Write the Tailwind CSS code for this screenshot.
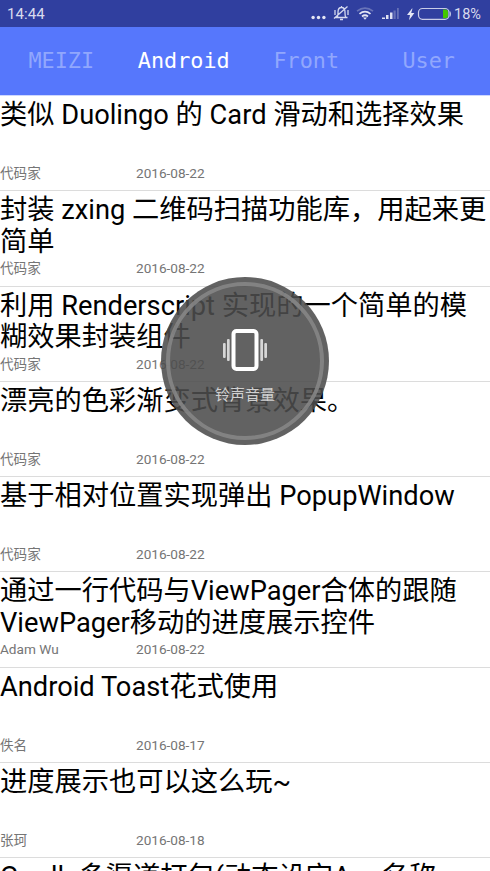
<!DOCTYPE html>
<html lang="zh-CN"><head><meta charset="utf-8"><title>Android</title>
<script src="https://cdn.jsdelivr.net/npm/@tailwindcss/browser@4"></script></head>
<body class="relative w-[490px] h-[871px] overflow-hidden bg-white font-[Roboto,'Noto_Sans_CJK_SC',sans-serif] text-black">
<header class="h-[27px] bg-[#303f9f] flex items-center justify-between pl-[7px] pr-2 text-[#d8dbee]">
<span class="text-[15px] leading-[27px] pt-px font-[Roboto,sans-serif] tracking-[0.1px]">14:44</span>
<svg class="ml-auto" width="142" height="27" viewBox="310 0 142 27" fill="none">
<g fill="#e4e6f4"><circle cx="313.100" cy="17.500" r="1.700"/><circle cx="318.500" cy="17.500" r="1.700"/><circle cx="323.900" cy="17.500" r="1.700"/></g>
<g stroke="#d5d9ef" stroke-width="1.300"><path d="M335.500 17.500h12M337 17.500c1.200-1.500 1-3 1-5.500 0-3 1.500-4.500 3.500-4.500s3.500 1.500 3.500 4.500c0 2.500-.2 4 1 5.500M340 19.500h3M341.500 6v1.500M335 10v5M348 10v5M334 18.500L347.500 6.500"/></g>
<g stroke="#e4e6f4" stroke-width="1.700"><path d="M357 11.200Q365 5 373 11.200" stroke="#6873b8"/><path d="M359.500 13.800Q365 9.300 370.500 13.800"/><path d="M362 16.500Q365 14 368 16.500"/></g><path d="M363 17.500h4l-2 2.300z" fill="#e4e6f4"/>
<g fill="#dfe2f3"><path d="M382 17.500h3v1.500h-3zM386 15h2.500v4h-2.500zM390 12.500h2.500v6.500h-2.500z"/><path d="M393.500 10.500h2.200V19h-2.200zM397 8h1.800v11H397z" fill="#6570b6"/></g>
<path d="M412 8.500L407 15h3l-1 5.300 5.400-7.300h-3.200l1.300-4.500z" fill="#e4e6f4"/>
<rect x="418.500" y="8.500" width="30.500" height="10.800" rx="4" stroke="#c8cce7" stroke-width="1.200"/><path d="M443 9.500h2.500q2.500 0 2.500 2.500v4q0 2.300-2.500 2.300H443z" fill="#43c800"/><path d="M450 11.500q1 2.500 0 5" stroke="#c8cce7"/></svg>
<span class="ml-[2px] pt-px text-[14.500px] leading-[27px] w-[28px] whitespace-nowrap">18%</span>
</header>
<nav class="h-[69px] grid grid-cols-4 items-center bg-[#5677fc] border-b border-[#cdd7fe] text-center text-[21.8px] font-['DejaVu_Sans_Mono',monospace] text-[#91a7fd]">
<span>MEIZI</span><span class="text-white">Android</span><span>Front</span><span>User</span>
</nav>
<main id="list" class="h-[775px] overflow-hidden"></main>
<aside class="absolute left-[161px] top-[277px] size-[168px] rounded-full bg-[#4c4c4c]/88 p-[5px]">
<div class="size-full rounded-full border-[4.500px] border-[#888888]/85 flex flex-col items-center pt-[43px]">
<svg width="46" height="43" viewBox="0 0 46 43" fill="#fff"><rect x="11.500" y="2" width="23" height="38" rx="3" fill="none" stroke="#fff" stroke-width="4"/><g fill="#d6d6d6"><rect x="1" y="14" width="2.700" height="15" rx="1"/><rect x="5" y="10" width="2.700" height="22" rx="1"/><rect x="38.300" y="10" width="2.700" height="22" rx="1"/><rect x="42.300" y="14" width="2.700" height="15" rx="1"/></g></svg>
<p class="mt-[13px] text-[15px] leading-[20px] text-[#d0d0d0]">铃声音量</p></div>
</aside>
<script>
const items=[
["类似 Duolingo 的 Card 滑动和选择效果","代码家","2016-08-22"],
["封装 zxing 二维码扫描功能库，用起来更<br>简单","代码家","2016-08-22"],
["利用 Renderscript 实现的一个简单的模<br>糊效果封装组件","代码家","2016-08-22"],
["漂亮的色彩渐变式背景效果。","代码家","2016-08-22"],
["基于相对位置实现弹出 PopupWindow","代码家","2016-08-22"],
["通过一行代码与ViewPager合体的跟随<br>ViewPager移动的进度展示控件","Adam Wu","2016-08-22"],
["Android Toast花式使用","佚名","2016-08-17"],
["进度展示也可以这么玩~","张珂","2016-08-18"],
["Gradle多渠道打包(动态设定App名称","",""]];
document.getElementById('list').innerHTML=items.map(([t,a,d])=>`<article class="h-[95.27px] border-b border-[#dcdcdc]"><h2 class="h-[67px] pt-[4px] text-[27.25px] leading-[31.4px] whitespace-nowrap">${t}</h2><div class="flex text-[13.6px] leading-5 text-[#757575]"><span class="w-[136px]">${a}</span><span>${d}</span></div></article>`).join('');
</script>
</body></html>
